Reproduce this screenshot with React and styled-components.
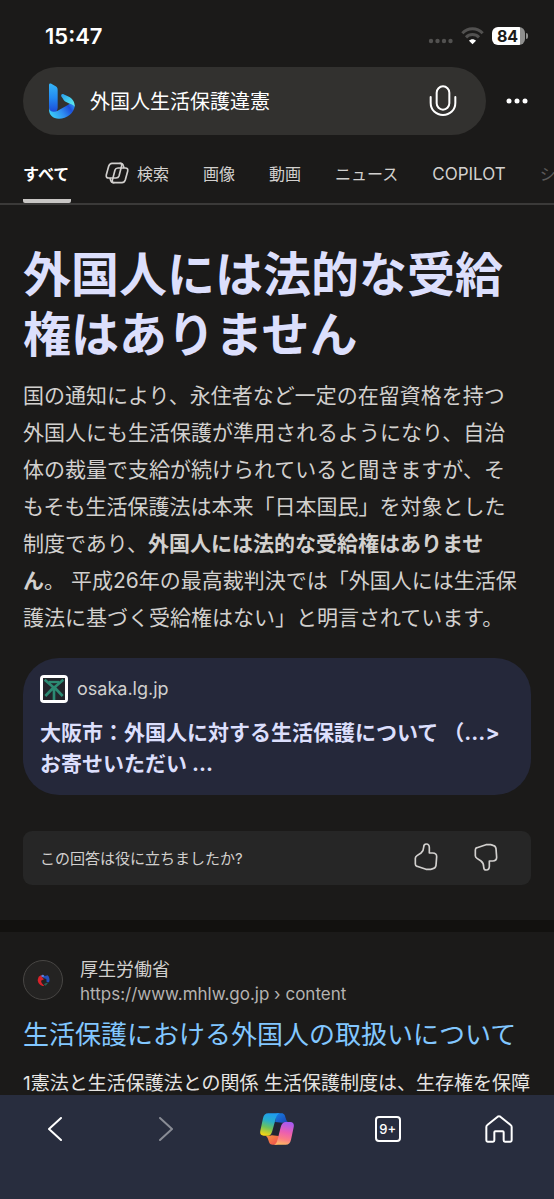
/**
 *
 * SearchResults
 *
 */

import React from 'react';
import styled, { createGlobalStyle, ThemeProvider } from 'styled-components';

const theme = {
  page: '#1b1a19',
  field: '#32312f',
  card: '#25283a',
  panel: '#262626',
  nav: '#282d3e',
  gap: '#12110f',
  line: '#3b3a39',
  text: '#d2d0ce',
  muted: '#b5b3b1',
  lavender: '#dcdffc',
  link: '#82c7ff',
};

const GlobalStyle = createGlobalStyle`
  * {
    box-sizing: border-box;
  }

  body {
    margin: 0;
    background: #1b1a19;
    font-family: Inter, 'Noto Sans CJK JP', sans-serif;
    -webkit-font-smoothing: antialiased;
  }

  h1, h2, p {
    margin: 0;
  }

  button {
    padding: 0;
    border: 0;
    background: none;
    color: inherit;
    font: inherit;
    cursor: pointer;
  }

  a {
    color: inherit;
    text-decoration: none;
  }

  svg {
    display: block;
  }
`;

const Screen = styled.div`
  display: flex;
  flex-direction: column;
  height: 100vh;
  overflow: hidden;
  background: ${props => props.theme.page};
  color: ${props => props.theme.text};
`;

const StatusBar = styled.div`
  display: flex;
  align-items: center;
  justify-content: space-between;
  flex: none;
  height: 67px;
  padding: 4px 26px 0 45px;
  color: #fff;
`;

const Clock = styled.time`
  font-size: 22px;
  font-weight: 600;
`;

const Indicators = styled.div`
  display: flex;
  align-items: center;
  gap: 8px;
`;

const BatteryWrapper = styled.div`
  display: flex;
  align-items: center;
  gap: 1px;
`;

const BatteryLevel = styled.div`
  width: 33px;
  height: 18px;
  padding-right: 2px;
  border-radius: 6px;
  background: linear-gradient(to right, #fff 84%, #8f8f8e 84%);
  color: #1b1a19;
  font-size: 16px;
  font-weight: 700;
  line-height: 18px;
  text-align: center;
`;

const BatteryTip = styled.div`
  width: 2px;
  height: 6px;
  border-radius: 0 2px 2px 0;
  background: #8f8f8e;
`;

const SearchRow = styled.form`
  display: flex;
  align-items: center;
  flex: none;
  gap: 20px;
  padding: 0 26px 0 23px;
`;

const SearchField = styled.div`
  display: flex;
  align-items: center;
  flex: 1;
  gap: 15px;
  height: 68px;
  padding: 0 29px 0 26px;
  border-radius: 34px;
  background: ${props => props.theme.field};
`;

const SearchInput = styled.input`
  flex: 1;
  min-width: 0;
  padding: 0 0 2px;
  border: 0;
  outline: 0;
  background: none;
  color: #fff;
  font-family: inherit;
  font-size: 20px;
`;

const Tabs = styled.nav`
  display: flex;
  flex: none;
  gap: 34px;
  height: 70px;
  padding: 0 0 0 23px;
  border-bottom: 2px solid ${props => props.theme.line};
  overflow: hidden;
`;

const Tab = styled.a`
  display: flex;
  align-items: center;
  flex: none;
  gap: 8px;
  min-width: ${props => (props.$active ? 48 : 0)}px;
  padding-top: ${props => (props.$active ? 12 : 8)}px;
  border-bottom: ${props => (props.$active ? '4px solid #c8c6c4' : 0)};
  border-radius: 2px;
  color: ${props => (props.$active ? '#fff' : props.theme.text)};
  font-size: 16px;
  font-weight: ${props => (props.$active ? 700 : 400)};
  opacity: ${props => (props.$faded ? 0.35 : 1)};
`;

const Latin = styled.span`
  padding-top: 2px;
  font-size: 17px;
`;

const Content = styled.main`
  flex: 1;
  min-height: 0;
  overflow: hidden;
`;

const Answer = styled.section`
  padding: 40px 23px 35px;
`;

const Headline = styled.h1`
  color: ${props => props.theme.lavender};
  font-size: 48px;
  font-weight: 700;
  line-height: 60px;
`;

const Summary = styled.p`
  margin-top: 12px;
  padding-right: 8px;
  font-size: 21px;
  line-height: 37px;
`;

const SourceCard = styled.a`
  display: block;
  margin-top: 22px;
  padding: 17px 17px 16px;
  border-radius: 36px;
  background: ${props => props.theme.card};
`;

const SourceSite = styled.div`
  display: flex;
  align-items: center;
  gap: 9px;
  font-size: 18px;
  line-height: 28px;
`;

const SourceTitle = styled.div`
  margin-top: 14px;
  color: ${props => props.theme.lavender};
  font-size: 21px;
  font-weight: 700;
  line-height: 31px;
`;

const Feedback = styled.div`
  display: flex;
  align-items: center;
  justify-content: space-between;
  height: 54px;
  margin-top: 36px;
  padding: 0 33px 2px 17px;
  border-radius: 9px;
  background: ${props => props.theme.panel};
  font-size: 15px;
`;

const FeedbackButtons = styled.div`
  display: flex;
  gap: 36px;
`;

const Separator = styled.div`
  height: 12px;
  background: ${props => props.theme.gap};
`;

const Result = styled.article`
  padding: 25px 23px;
`;

const ResultSite = styled.div`
  display: flex;
  gap: 17px;
`;

const SiteIcon = styled.div`
  display: grid;
  place-items: center;
  width: 40px;
  height: 40px;
  margin-top: 3px;
  border: 1px solid #484644;
  border-radius: 50%;
  background: #242322;
`;

const SiteName = styled.div`
  font-size: 18px;
  line-height: 25px;
`;

const SiteUrl = styled.div`
  color: ${props => props.theme.muted};
  font-size: 17px;
  line-height: 25px;
`;

const ResultTitle = styled.h2`
  margin-top: 10px;
  color: ${props => props.theme.link};
  font-size: 26px;
  font-weight: 400;
  line-height: 36px;
  white-space: nowrap;
`;

const Snippet = styled.p`
  margin-top: 16px;
  color: #e6e4e2;
  font-size: 19px;
  line-height: 30px;
  white-space: nowrap;
`;

const BottomBar = styled.nav`
  display: grid;
  grid-template-columns: repeat(5, 1fr);
  align-items: start;
  flex: none;
  height: 104px;
  padding-top: 12px;
  background: ${props => props.theme.nav};
  color: #fff;
`;

const BarButton = styled.button`
  display: grid;
  place-items: center;
  height: 44px;
  opacity: ${props => (props.disabled ? 0.45 : 1)};
`;

const TabCount = styled.span`
  width: 26px;
  height: 26px;
  border: 2px solid #fff;
  border-radius: 4px;
  font-size: 13px;
  font-weight: 500;
  line-height: 22px;
  text-align: center;
`;

const SignalDots = () => (
  <svg width="25" height="17" viewBox="0 0 25 17" fill="#525150">
    <circle cx="3" cy="14" r="2.2" />
    <circle cx="9.5" cy="14" r="2.2" />
    <circle cx="16" cy="14" r="2.2" />
    <circle cx="22.5" cy="14" r="2.2" />
  </svg>
);

const WifiIcon = () => (
  <svg width="23" height="18" viewBox="0 0 69 54" fill="none">
    <path
      d="M4 19C21 1 48 1 65 19"
      stroke="#525150"
      strokeWidth="9"
    />
    <path d="M15 31C26 20 43 20 54 31" stroke="#525150" strokeWidth="9" />
    <path d="M24 41C30 35 39 35 45 41L34.5 52Z" fill="#fff" />
  </svg>
);

const BingLogo = () => (
  <svg width="26" height="36" viewBox="0 0 78 107">
    <defs>
      <linearGradient id="stem" x1="0" y1="0" x2="0" y2="1">
        <stop offset="0" stopColor="#35b5f7" />
        <stop offset="0.5" stopColor="#2389f2" />
        <stop offset="1" stopColor="#1b48d8" />
      </linearGradient>
      <linearGradient id="bowl" x1="0" y1="0.6" x2="1" y2="0.2">
        <stop offset="0" stopColor="#3bcdf8" />
        <stop offset="0.45" stopColor="#2f8df0" />
        <stop offset="0.8" stopColor="#1d4fd9" />
        <stop offset="1" stopColor="#2c8ef0" />
      </linearGradient>
      <linearGradient id="arm" x1="0" y1="0" x2="1" y2="1">
        <stop offset="0" stopColor="#2a9bea" />
        <stop offset="0.5" stopColor="#42cdf0" />
        <stop offset="1" stopColor="#6bf0e6" />
      </linearGradient>
    </defs>
    <path
      d="M0 6C0 1 3 0 7 2L20 9C25 12 26 15 26 21V73C26 82 20 88 13 88C5 88 0 82 0 74Z"
      fill="url(#stem)"
    />
    <path
      d="M0 74C1 86 14 89 26 83L55 66C64 60 78 58 77 70C75 89 54 107 30 107C11 107 0 94 0 80Z"
      fill="url(#bowl)"
    />
    <path
      d="M37 40C35 34 39 31 45 34L58 40C71 46 78 57 77 71C75 66 70 64 62 62L50 56C46 54 44 51 42 47Z"
      fill="url(#arm)"
    />
  </svg>
);

const MicIcon = () => (
  <svg
    width="28"
    height="32"
    viewBox="0 0 84 96"
    fill="none"
    stroke="#fff"
    strokeWidth="6"
    strokeLinecap="round"
  >
    <rect x="23" y="4" width="38" height="70" rx="19" />
    <path d="M5 36V53C5 75 21 90 42 90C63 90 79 75 79 53V36" />
  </svg>
);

const MoreIcon = () => (
  <svg width="22" height="6" viewBox="0 0 22 6" fill="#fff">
    <circle cx="3" cy="3" r="2.5" />
    <circle cx="11" cy="3" r="2.5" />
    <circle cx="19" cy="3" r="2.5" />
  </svg>
);

const CopilotOutline = () => (
  <svg
    width="24"
    height="22"
    viewBox="-1 -2 72 66"
    fill="none"
    stroke="currentColor"
    strokeWidth="5"
    strokeLinejoin="round"
  >
    <path d="M20 2H45Q51 2 49 9L41 40Q39 46 32 46H10Q1 46 3 36L10 11Q13 2 20 2Z" />
    <path d="M50 60H25Q19 60 21 53L29 22Q31 16 38 16H60Q69 16 67 26L60 51Q57 60 50 60Z" />
    <path d="M43 2Q52 1 54 9L56 16M27 60Q18 61 16 53L14 46" />
  </svg>
);

const CopilotLogo = () => (
  <svg width="34" height="32" viewBox="0 0 102 94">
    <defs>
      <linearGradient id="copilotLeft" x1="0.6" y1="0" x2="0.35" y2="1">
        <stop offset="0" stopColor="#1f9bf0" />
        <stop offset="0.35" stopColor="#27aecb" />
        <stop offset="0.65" stopColor="#6cc25c" />
        <stop offset="1" stopColor="#f4d415" />
      </linearGradient>
      <linearGradient id="copilotRight" x1="0.6" y1="0" x2="0.4" y2="1">
        <stop offset="0" stopColor="#a65af2" />
        <stop offset="0.45" stopColor="#ec5fb0" />
        <stop offset="0.75" stopColor="#fb7d84" />
        <stop offset="1" stopColor="#ffb765" />
      </linearGradient>
      <linearGradient id="copilotTop" x1="0" y1="0" x2="1" y2="1">
        <stop offset="0" stopColor="#1680e4" />
        <stop offset="1" stopColor="#1c3fae" />
      </linearGradient>
      <linearGradient id="copilotBottom" x1="0" y1="0" x2="1" y2="1">
        <stop offset="0" stopColor="#f99b3d" />
        <stop offset="1" stopColor="#ee4a4f" />
      </linearGradient>
    </defs>
    <path
      d="M50 0H64C74 0 75 8 77 14C79 22 82 27 88 27H76C70 27 67 28 65 30L45 28Z"
      fill="url(#copilotTop)"
    />
    <path
      d="M52 94H38C28 94 27 86 25 80C23 72 20 67 14 67H26C32 67 35 66 37 64L57 66Z"
      fill="url(#copilotBottom)"
    />
    <path d="M45 26L66 28L57 68L36 66Z" fill="#202431" />
    <path
      d="M25 0H60C52 2 49 10 46 20L37 52C34 62 31 67 24 67H11Q-2 67 1 52L9 15Q12 0 25 0Z"
      fill="url(#copilotLeft)"
    />
    <path
      d="M77 94H42C50 92 51 84 54 74L62 42C65 32 69 26 77 26H91Q104 26 101 42L93 79Q90 94 77 94Z"
      fill="url(#copilotRight)"
    />
  </svg>
);

const OsakaIcon = () => (
  <svg width="28" height="28" viewBox="0 0 84 84">
    <rect width="84" height="84" rx="12" fill="#fff" />
    <rect x="9" y="9" width="66" height="66" fill="#22252a" />
    <g stroke="#2c8a72" strokeWidth="8" fill="none">
      <path d="M14 14L42 38L70 14M42 36L16 63M42 36L68 63M42 34V75" />
      <path d="M26 21H58" strokeWidth="7" />
    </g>
  </svg>
);

const MinistryIcon = () => (
  <svg width="13" height="13" viewBox="0 0 39 39" fill="none">
    <path
      d="M5 8L13 3L15 10L21 16L12 20L14 27L22 36C12 37 3 29 2 18Z"
      fill="#d8222a"
    />
    <path d="M17 3L24 6L32 4C38 10 39 18 36 25L29 25L28 15L19 12Z" fill="#2450b8" />
    <path d="M33 27L26 35L20 31L27 27Z" fill="#2a5f58" />
    <circle cx="17" cy="6" r="4" fill="#5b7fdc" />
  </svg>
);

const ThumbIcon = ({ down }) => (
  <svg
    width="24"
    height="28"
    viewBox="0 0 72 84"
    fill="none"
    stroke="currentColor"
    strokeWidth="5"
    strokeLinejoin="round"
  >
    <path
      d="M29 13C29 5 32 3 37 3C43 3 46 7 46 14V30H56C63 30 68 33 68 41L66 67C65 73 62 76 57 77L50 79H36L9 70C5 69 4 67 4 63V46C4 42 6 40 9 38L21 30C26 26 29 21 29 13Z"
      transform={down ? 'matrix(1 0 0 -1 0 84)' : undefined}
    />
  </svg>
);

const Chevron = ({ forward }) => (
  <svg
    width="14"
    height="24"
    viewBox="0 0 14 24"
    fill="none"
    stroke="currentColor"
    strokeWidth="2"
    strokeLinecap="round"
    strokeLinejoin="round"
  >
    <path d={forward ? 'M1 1L13 12L1 23' : 'M13 1L1 12L13 23'} />
  </svg>
);

const HomeIcon = () => (
  <svg
    width="28"
    height="28"
    viewBox="0 0 84 84"
    fill="none"
    stroke="currentColor"
    strokeWidth="6"
    strokeLinejoin="round"
  >
    <path d="M4 36Q4 32 7 30L38 5Q42 2 46 5L77 30Q80 32 80 36V76Q80 80 76 80H60Q56 80 56 76V52Q56 49 53 49H31Q28 49 28 52V76Q28 80 24 80H8Q4 80 4 76Z" />
  </svg>
);

const tabs = [
  { label: '画像' },
  { label: '動画' },
  { label: 'ニュース' },
];

export default function App() {
  return (
    <ThemeProvider theme={theme}>
      <GlobalStyle />
      <Screen>
        <StatusBar>
          <Clock>15:47</Clock>
          <Indicators>
            <SignalDots />
            <WifiIcon />
            <BatteryWrapper>
              <BatteryLevel>84</BatteryLevel>
              <BatteryTip />
            </BatteryWrapper>
          </Indicators>
        </StatusBar>
        <SearchRow onSubmit={e => e.preventDefault()}>
          <SearchField>
            <BingLogo />
            <SearchInput
              type="text"
              aria-label="検索"
              defaultValue="外国人生活保護違憲"
            />
            <button type="button" aria-label="音声検索">
              <MicIcon />
            </button>
          </SearchField>
          <button type="button" aria-label="メニュー">
            <MoreIcon />
          </button>
        </SearchRow>
        <Tabs>
          <Tab href="#all" $active>
            すべて
          </Tab>
          <Tab href="#search">
            <CopilotOutline />
            検索
          </Tab>
          {tabs.map(tab => (
            <Tab key={tab.label} href="#tab">
              {tab.label}
            </Tab>
          ))}
          <Tab href="#copilot">
            <Latin>COPILOT</Latin>
          </Tab>
          <Tab href="#shopping" $faded>
            シ
          </Tab>
        </Tabs>
        <Content>
          <Answer>
            <Headline>外国人には法的な受給権はありません</Headline>
            <Summary>
              国の通知により、永住者など一定の在留資格を持つ外国人にも生活保護が準用されるようになり、自治体の裁量で支給が続けられていると聞きますが、そもそも生活保護法は本来「日本国民」を対象とした制度であり、
              <b>外国人には法的な受給権はありません</b>。
              平成26年の最高裁判決では「外国人には生活保護法に基づく受給権はない」と明言されています。
            </Summary>
            <SourceCard href="#osaka">
              <SourceSite>
                <OsakaIcon />
                osaka.lg.jp
              </SourceSite>
              <SourceTitle>
                大阪市：外国人に対する生活保護について （...&gt;
                <br />
                お寄せいただい ...
              </SourceTitle>
            </SourceCard>
            <Feedback>
              この回答は役に立ちましたか?
              <FeedbackButtons>
                <button type="button" aria-label="はい">
                  <ThumbIcon />
                </button>
                <button type="button" aria-label="いいえ">
                  <ThumbIcon down />
                </button>
              </FeedbackButtons>
            </Feedback>
          </Answer>
          <Separator />
          <Result>
            <ResultSite>
              <SiteIcon>
                <MinistryIcon />
              </SiteIcon>
              <div>
                <SiteName>厚生労働省</SiteName>
                <SiteUrl>https://www.mhlw.go.jp › content</SiteUrl>
              </div>
            </ResultSite>
            <ResultTitle>
              <a href="#mhlw">生活保護における外国人の取扱いについて</a>
            </ResultTitle>
            <Snippet>
              1憲法と生活保護法との関係 生活保護制度は、生存権を保障
            </Snippet>
          </Result>
        </Content>
        <BottomBar>
          <BarButton type="button" aria-label="戻る">
            <Chevron />
          </BarButton>
          <BarButton type="button" aria-label="進む" disabled>
            <Chevron forward />
          </BarButton>
          <BarButton type="button" aria-label="Copilot">
            <CopilotLogo />
          </BarButton>
          <BarButton type="button" aria-label="タブ">
            <TabCount>9+</TabCount>
          </BarButton>
          <BarButton type="button" aria-label="ホーム">
            <HomeIcon />
          </BarButton>
        </BottomBar>
      </Screen>
    </ThemeProvider>
  );
}
